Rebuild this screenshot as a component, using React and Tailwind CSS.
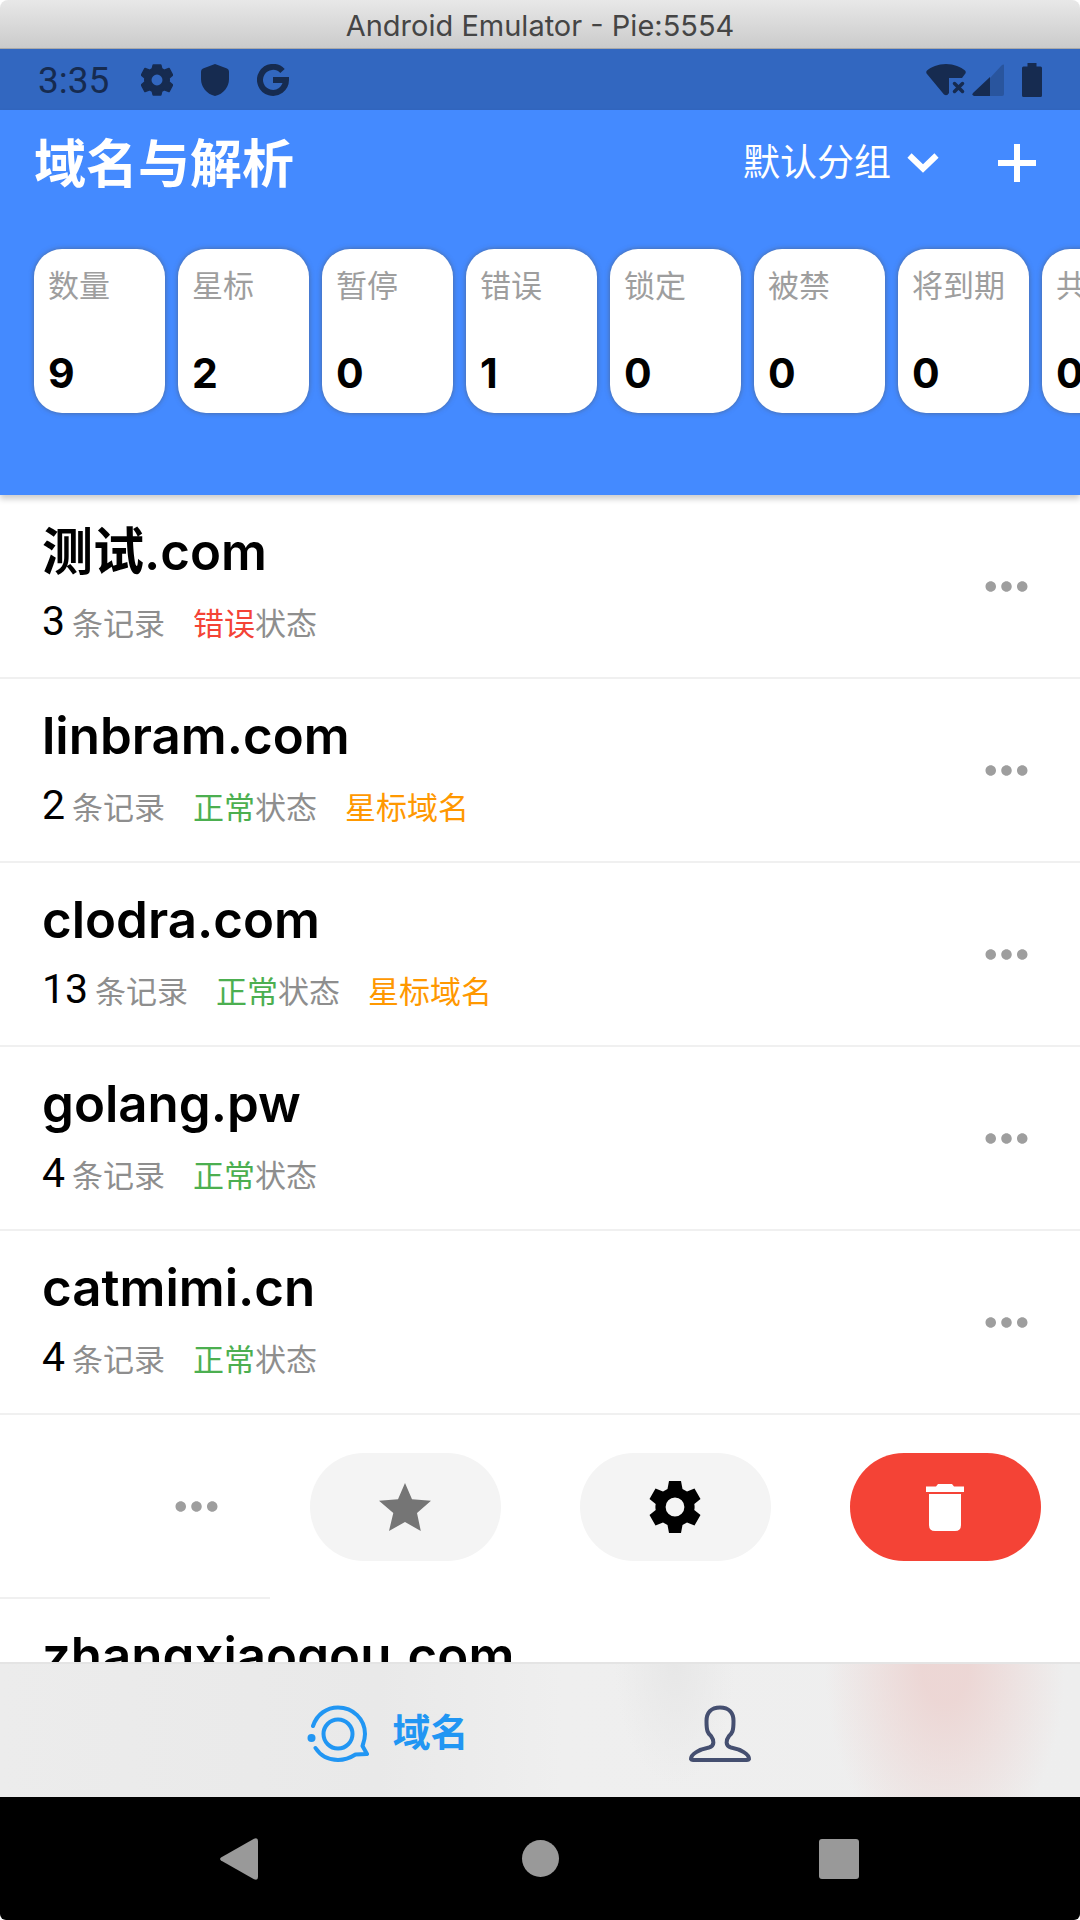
import { MdMoreHoriz } from 'react-icons/md';

const stats = [
  { label: '数量', value: 9 },
  { label: '星标', value: 2 },
  { label: '暂停', value: 0 },
  { label: '错误', value: 1 },
  { label: '锁定', value: 0 },
  { label: '被禁', value: 0 },
  { label: '将到期', value: 0 },
  { label: '共享', value: 0 },
];

const domains = [
  { name: '测试.com', records: 3, ok: false, starred: false },
  { name: 'linbram.com', records: 2, ok: true, starred: true },
  { name: 'clodra.com', records: 13, ok: true, starred: true },
  { name: 'golang.pw', records: 4, ok: true, starred: false },
  { name: 'catmimi.cn', records: 4, ok: true, starred: false },
  { name: 'fanxing.me', records: 6, ok: true, starred: false, swiped: true },
  { name: 'zhangxiaogou.com', records: 5, ok: true, starred: false },
];

function GearIcon({ className }) {
  return (
    <svg viewBox="-26 -26 52 52" className={className} fill="currentColor" fillRule="evenodd">
      <path d="M-6 -26H6L7.5 -18L12 -15.5L19.5 -18.5L25.5 -8L19.3 -3Q19.9 0 19.3 3L25.5 8L19.5 18.5L12 15.5L7.5 18L6 26H-6L-7.5 18L-12 15.5L-19.5 18.5L-25.5 8L-19.3 3Q-19.9 0 -19.3 -3L-25.5 -8L-19.5 -18.5L-12 -15.5L-7.5 -18ZM0 -9.4A9.4 9.4 0 1 0 0 9.4A9.4 9.4 0 1 0 0 -9.4Z" />
    </svg>
  );
}

function StarIcon() {
  return (
    <svg viewBox="0 0 52 48" className="w-[52px] h-12" fill="currentColor">
      <path d="M26 0L33 16.2L52 17.7L38 30L41.8 48L26 39L10 48L14.3 30L0 17.7L19 16.2Z" />
    </svg>
  );
}

function TrashIcon() {
  return (
    <svg viewBox="0 0 38 47" className="w-[38px] h-[47px]" fill="currentColor">
      <path d="M0 2.5H10L12 0H26L28 2.5H38V8H0Z" />
      <path d="M3 10H35V41Q35 47 29 47H9Q3 47 3 41Z" />
    </svg>
  );
}

function TitleBar() {
  return (
    <div className="flex h-[49px] shrink-0 items-center justify-center rounded-t-lg border-b border-[#a9a9a9] bg-linear-to-b from-[#e8e8e8] to-[#cbcbcb] pt-1 font-[Inter] text-[29px] text-[#454545]">
      Android Emulator - Pie:5554
    </div>
  );
}

function StatusBar() {
  return (
    <div className="flex h-[61px] shrink-0 items-center justify-between bg-[#3267c0] px-[38px] text-[#162b50]">
      <div className="flex items-center">
        <span className="w-[103px] pt-0.5 text-[37px]">3:35</span>
        <svg viewBox="-26 -26 52 52" className="size-8" fill="currentColor" stroke="currentColor" strokeWidth="3" strokeLinejoin="round" fillRule="evenodd">
          <path d="M-6 -24H6L7.5 -18L12 -15.5L19.5 -18.5L25 -8L19.3 -3Q19.9 0 19.3 3L25 8L19.5 18.5L12 15.5L7.5 18L6 24H-6L-7.5 18L-12 15.5L-19.5 18.5L-25 8L-19.3 3Q-19.9 0 -19.3 -3L-25 -8L-19.5 -18.5L-12 -15.5L-7.5 -18ZM0 -10.4A10.4 10.4 0 1 0 0 10.4A10.4 10.4 0 1 0 0 -10.4Z" />
        </svg>
        <svg viewBox="0 0 28 32" className="ml-7 h-8 w-7" fill="currentColor">
          <path d="M14 0L26 4.4Q28 5.2 28 7.4V15C28 23 22.5 30 14 32C5.5 30 0 23 0 15V7.4Q0 5.2 2 4.4Z" />
        </svg>
        <svg viewBox="0 0 32 32" className="ml-7 size-8" fill="none" stroke="currentColor" strokeWidth="6">
          <path d="M25.5 7A13 13 0 1 0 29 16H16" />
        </svg>
      </div>
      <div className="flex items-center">
        <svg viewBox="0 0 40 32" className="h-8 w-10" fill="currentColor">
          <path d="M20 0C28 0 35 3 39 6.5Q40.5 8 39 10L36 14H23V29Q21 32.5 18 30.5L1 10Q-.5 8 1 6.5C5 3 12 0 20 0Z" />
          <path d="M28.5 19.5L36.5 27.5M36.5 19.5L28.5 27.5" stroke="currentColor" strokeWidth="3.5" strokeLinecap="round" />
        </svg>
        <svg viewBox="0 0 32 32" className="ml-1.5 size-8" fill="currentColor">
          <path d="M32 1V30Q32 32 30 32H18V14L30 1Q32 0 32 1Z" opacity=".3" />
          <path d="M18 13V32H2Q-.5 31 1 29Z" />
        </svg>
        <svg viewBox="0 0 20 34" className="ml-[18px] h-[34px] w-5" fill="currentColor">
          <path d="M5.5 0H14.5V3.5H18.5Q20 3.5 20 5V32.5Q20 34 18.5 34H1.5Q0 34 0 32.5V5Q0 3.5 1.5 3.5H5.5Z" />
        </svg>
      </div>
    </div>
  );
}

function StatCard({ label, value }) {
  return (
    <div className="flex h-[164px] w-[131px] shrink-0 flex-col justify-between rounded-[28px] bg-white px-3.5 py-4 shadow-[0_0_5px_rgba(80,80,80,0.6)]">
      <span className="whitespace-nowrap text-[31px] leading-[44px] text-[#9e9e9e]">{label}</span>
      <span className="font-[Inter] text-[41px] leading-[48px] font-bold text-black">{value}</span>
    </div>
  );
}

function Header() {
  return (
    <header className="relative z-10 h-[385px] shrink-0 overflow-hidden bg-[#448aff] shadow-[0_4px_6px_rgba(0,0,0,0.2)]">
      <div className="flex h-[106px] items-center pr-11 pl-[34px] text-white">
        <h1 className="flex-1 pt-1.5 text-[52px] font-bold">域名与解析</h1>
        <div className="relative flex items-center">
          <select aria-label="分组" className="appearance-none bg-transparent pr-12 pt-0.5 text-[37px]">
            <option>默认分组</option>
          </select>
          <svg viewBox="0 0 32 20" className="pointer-events-none absolute right-0 h-5 w-8" fill="none" stroke="currentColor" strokeWidth="6">
            <path d="M2.5 2.5L16 15.5L29.5 2.5" />
          </svg>
        </div>
        <button aria-label="添加" className="ml-[59px]">
          <svg viewBox="0 0 38 38" className="size-[38px]" stroke="currentColor" strokeWidth="6">
            <path d="M19 0V38M0 19H38" />
          </svg>
        </button>
      </div>
      <div className="flex gap-[13px] pt-[33px] pl-[34px]">
        {stats.map((s) => (
          <StatCard key={s.label} label={s.label} value={s.value} />
        ))}
      </div>
    </header>
  );
}

function MoreButton() {
  return (
    <button aria-label="更多" className="text-[#9e9e9e]">
      <MdMoreHoriz className="size-[63px]" />
    </button>
  );
}

function SwipedRow() {
  return (
    <li className="flex h-[184px]">
      <div className="flex w-1/4 items-center justify-end border-b-2 border-[#f0f0f0] pr-[42px]">
        <MoreButton />
      </div>
      <div className="flex w-1/4 items-center justify-center">
        <button aria-label="星标" className="flex h-[108px] w-[191px] items-center justify-center rounded-full bg-[#f4f4f4] text-[#757575]">
          <StarIcon />
        </button>
      </div>
      <div className="flex w-1/4 items-center justify-center">
        <button aria-label="设置" className="flex h-[108px] w-[191px] items-center justify-center rounded-full bg-[#f4f4f4] text-black">
          <GearIcon className="size-[52px]" />
        </button>
      </div>
      <div className="flex w-1/4 items-center justify-center">
        <button aria-label="删除" className="flex h-[108px] w-[191px] items-center justify-center rounded-full bg-[#f44336] text-white">
          <TrashIcon />
        </button>
      </div>
    </li>
  );
}

function DomainRow({ domain }) {
  return (
    <li className="flex h-[184px] items-center justify-between border-b-2 border-[#f0f0f0] px-[42px]">
      <div className="self-start pt-[25px]">
        <h2 className="font-[Inter,'Noto_Sans_CJK_SC',sans-serif] text-[51px] leading-[64px] font-semibold text-black">{domain.name}</h2>
        <p className="mt-[5px] flex items-baseline text-[31px] leading-[64px] text-[#8e8e8e]">
          <span className="mr-[7px] text-[41px] text-black">{domain.records}</span>
          条记录
          <span className={domain.ok ? 'ml-7 text-[#4caf50]' : 'ml-7 text-[#f44336]'}>{domain.ok ? '正常' : '错误'}</span>
          状态
          {domain.starred && <span className="ml-7 text-[#ff9800]">星标域名</span>}
        </p>
      </div>
      <MoreButton />
    </li>
  );
}

function TabBar() {
  return (
    <nav className="flex h-[135px] shrink-0 items-center justify-center gap-[220px] border-t-2 border-[#e4e4e4] bg-[radial-gradient(ellipse_120px_200px_at_945px_0,rgba(236,212,210,0.9)_20%,transparent),radial-gradient(ellipse_60px_120px_at_675px_0,#e7e7e7,transparent),linear-gradient(to_right,#ececec,#e9e9e9_35%,#efefef_52%,#eeeeee)] pt-1.5 pr-[22px]">
      <button className="flex items-center gap-[23px] text-[#2196f3]">
        <svg viewBox="0 0 62 57" className="h-[57px] w-[62px]" fill="none" stroke="currentColor" strokeWidth="4" strokeLinejoin="round" strokeLinecap="round">
          <path d="M6 21C10 9 20 2.5 31 2.5C46 2.5 58 14 58 29C58 34 56.5 38 55.5 41L60 49L48.5 49.5C43 53 37 55 31 55C21 55 13 50 8.5 43" />
          <circle cx="31" cy="29" r="14.5" />
          <circle cx="4.5" cy="33" r="4" fill="currentColor" stroke="none" />
        </svg>
        <span className="text-[38px] font-bold">域名</span>
      </button>
      <button aria-label="我的" className="text-[#454f70]">
        <svg viewBox="0 0 62 57" className="h-[57px] w-[62px]" fill="none" stroke="currentColor" strokeWidth="4" strokeLinejoin="round">
          <path d="M31 2.5C22 2.5 17.5 8 17.5 16C17.5 27 19 28 22 31C25 35 26 41 20 42.5C10 44.5 2 49 2 54Q2.5 55 4 55H58Q59.5 55 60 54C60 49 52 44.5 42 42.5C36 41 37 35 40 31C43 28 44.5 27 44.5 16C44.5 8 40 2.5 31 2.5Z" />
        </svg>
      </button>
    </nav>
  );
}

function SystemNav() {
  return (
    <div className="flex h-[123px] shrink-0 items-center justify-center rounded-b-md bg-black text-[#999999]">
      <button aria-label="返回" className="flex w-[299px] justify-center pr-1">
        <svg viewBox="0 0 38 42" className="h-[42px] w-[38px]" fill="currentColor">
          <path d="M1 19.5L34 .8Q38 -.8 38 3V39Q38 42.8 34 41.2L1 22.5Q-.8 21 1 19.5Z" />
        </svg>
      </button>
      <button aria-label="主页" className="flex w-[299px] justify-center">
        <span className="size-[37px] rounded-full bg-[#999999]" />
      </button>
      <button aria-label="最近任务" className="flex w-[299px] justify-center">
        <span className="size-10 rounded-[3px] bg-[#999999]" />
      </button>
    </div>
  );
}

export default function App() {
  return (
    <div className="flex h-screen flex-col overflow-hidden bg-white font-[Roboto,'Noto_Sans_CJK_SC',sans-serif]">
      <TitleBar />
      <StatusBar />
      <Header />
      <ul className="min-h-0 flex-1 overflow-hidden">
        {domains.map((d) => (d.swiped ? <SwipedRow key={d.name} /> : <DomainRow key={d.name} domain={d} />))}
      </ul>
      <TabBar />
      <SystemNav />
    </div>
  );
}
